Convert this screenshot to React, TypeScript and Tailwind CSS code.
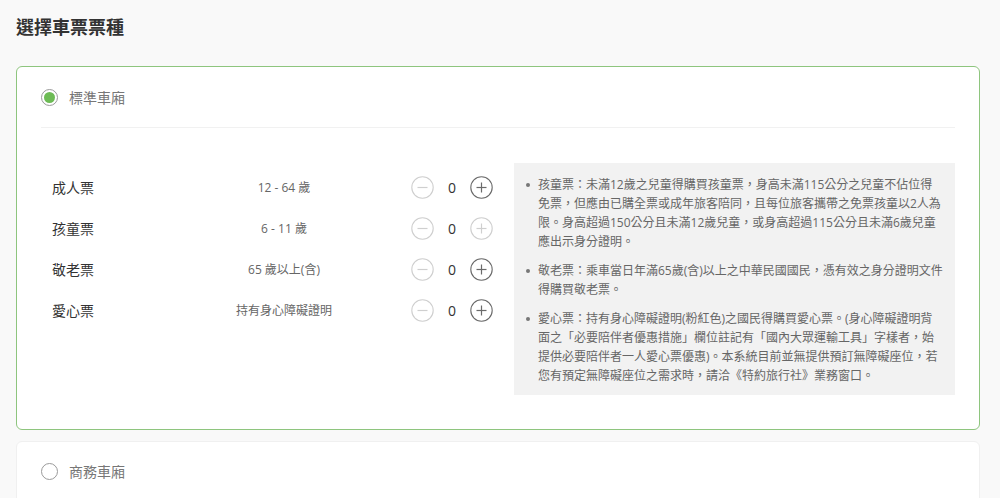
import React from "react";

const FONT = { fontFamily: '"Open Sans", "Noto Sans CJK TC", sans-serif' };

function CircleBtn({ kind, dark }: { kind: "minus" | "plus"; dark: boolean }) {
  const c = dark ? "#6b6b6b" : "#cfcfcf";
  return (
    <svg width="23" height="23" viewBox="0 0 23 23" className="shrink-0">
      <circle cx="11.5" cy="11.5" r="10.7" fill="none" stroke={c} strokeWidth="1.1" />
      <line x1="6.5" y1="11.5" x2="16.5" y2="11.5" stroke={c} strokeWidth="1.2" />
      {kind === "plus" && <line x1="11.5" y1="6.5" x2="11.5" y2="16.5" stroke={c} strokeWidth="1.2" />}
    </svg>
  );
}

function Radio({ checked }: { checked: boolean }) {
  return (
    <div className="w-[17px] h-[17px] rounded-full border border-[#9a9a9a] flex items-center justify-center shrink-0">
      {checked && <div className="w-[11px] h-[11px] rounded-full bg-[#6dbb55]" />}
    </div>
  );
}

const rows = [
  { name: "成人票", age: "12 - 64 歲", plusDark: true },
  { name: "孩童票", age: "6 - 11 歲", plusDark: false },
  { name: "敬老票", age: "65 歲以上(含)", plusDark: true },
  { name: "愛心票", age: "持有身心障礙證明", plusDark: true },
];

const notes: string[][] = [
  [
    "孩童票：未滿12歲之兒童得購買孩童票，身高未滿115公分之兒童不佔位得",
    "免票，但應由已購全票或成年旅客陪同，且每位旅客攜帶之免票孩童以2人為",
    "限。身高超過150公分且未滿12歲兒童，或身高超過115公分且未滿6歲兒童",
    "應出示身分證明。",
  ],
  ["敬老票：乘車當日年滿65歲(含)以上之中華民國國民，憑有效之身分證明文件", "得購買敬老票。"],
  [
    "愛心票：持有身心障礙證明(粉紅色)之國民得購買愛心票。(身心障礙證明背",
    "面之「必要陪伴者優惠措施」欄位註記有「國內大眾運輸工具」字樣者，始",
    "提供必要陪伴者一人愛心票優惠)。本系統目前並無提供預訂無障礙座位，若",
    "您有預定無障礙座位之需求時，請洽《特約旅行社》業務窗口。",
  ],
];

export default function App() {
  return (
    <div className="w-[1000px] h-[498px] overflow-hidden bg-[#f9f9f9]" style={FONT}>
      <div className="pl-4 pt-[15px] text-[18px] leading-[24px] font-bold text-[#333]">選擇車票票種</div>

      <div className="mt-[27px] ml-4 mr-5 bg-white border border-[#8ec57e] rounded-[6px] px-6">
        <div className="pt-[20px] pb-[19px] border-b border-[#f1f1f1] flex items-center h-[61px]">
          <Radio checked />
          <span className="ml-[11px] text-[14px] text-[#777]">標準車廂</span>
        </div>
        <div className="pt-[35px] pb-[34px] flex items-start">
          <div className="w-[473px] pl-[11px] pt-[4px] shrink-0">
            {rows.map((r) => (
              <div key={r.name} className="h-[41px] flex items-center">
                <span className="w-[130px] text-[14px] text-[#333]">{r.name}</span>
                <span className="w-[204px] text-center text-[12px] text-[#666]">{r.age}</span>
                <div className="ml-[25px] flex items-center">
                  <CircleBtn kind="minus" dark={false} />
                  <span className="w-[36px] text-center text-[14px] text-[#333]">0</span>
                  <CircleBtn kind="plus" dark={r.plusDark} />
                </div>
              </div>
            ))}
          </div>
          <div className="flex-1 bg-[#f2f2f2] pl-[12px] pr-[8px] pt-[12px] pb-[10px] flex flex-col gap-[10px]">
            {notes.map((lines, i) => (
              <div key={i} className="flex text-[12px] leading-[19px] text-[#666]">
                <span className="w-[12px] shrink-0 pt-[8px]">
                  <span className="block w-[4px] h-[4px] rounded-full bg-[#777]" />
                </span>
                <div className="whitespace-nowrap">
                  {lines.map((l, j) => (
                    <div key={j}>{l}</div>
                  ))}
                </div>
              </div>
            ))}
          </div>
        </div>
      </div>

      <div className="mt-[11px] ml-4 mr-5 h-[100px] bg-white border border-[#f0f0f0] rounded-[6px] px-6 pt-[18px]">
        <div className="h-[22px] flex items-center">
          <Radio checked={false} />
          <span className="ml-[11px] text-[14px] text-[#777]">商務車廂</span>
        </div>
      </div>
    </div>
  );
}
